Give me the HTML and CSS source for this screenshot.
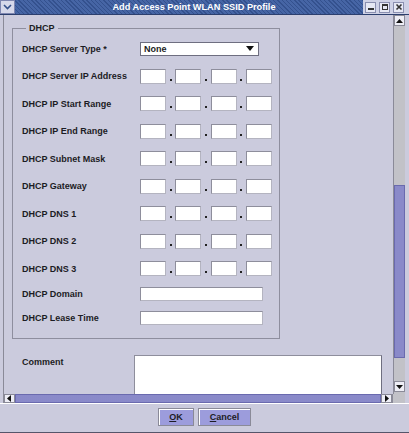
FILE: index.html
```html
<!DOCTYPE html>
<html>
  <head>
    <meta charset="utf-8">
    <link rel="stylesheet" href="styles.css">
  </head>
  <body>
    <div class="window">
      <div class="titlebar">
        <div class="menu-btn">
          <svg width="9" height="6" viewBox="0 0 9 6"><path d="M1 1 L4.5 4.5 L8 1" fill="none" stroke="#34508a" stroke-width="1.6"/></svg>
        </div>
        <div class="title">Add Access Point WLAN SSID Profile</div>
        <div class="controls">
          <span class="ctl"><svg width="8" height="8" viewBox="0 0 8 8"><rect x="1" y="5" width="6" height="2" fill="#333"/></svg></span>
          <span class="ctl"><svg width="8" height="8" viewBox="0 0 8 8"><rect x="1.5" y="1.5" width="5" height="5" fill="none" stroke="#333"/><rect x="1" y="1" width="6" height="2" fill="#333"/></svg></span>
          <span class="ctl"><svg width="8" height="8" viewBox="0 0 8 8"><path d="M1.5 1.5 L6.5 6.5 M6.5 1.5 L1.5 6.5" stroke="#333" stroke-width="1.6"/></svg></span>
        </div>
      </div>

      <div class="pane">
        <div class="pane-main">
          <div class="viewport">
            <fieldset class="group">
              <legend>DHCP</legend>
              <div class="row">
                <label>DHCP Server Type *</label>
                <div class="select">
                  <span>None</span>
                  <svg width="8" height="5" viewBox="0 0 8 5"><path d="M0 0 H8 L4 5 Z" fill="#111"/></svg>
                </div>
              </div>
              <div class="row">
                <label>DHCP Server IP Address</label>
                <div class="ip"><span class="box"></span><i></i><span class="box"></span><i></i><span class="box"></span><i></i><span class="box"></span></div>
              </div>
              <div class="row">
                <label>DHCP IP Start Range</label>
                <div class="ip"><span class="box"></span><i></i><span class="box"></span><i></i><span class="box"></span><i></i><span class="box"></span></div>
              </div>
              <div class="row">
                <label>DHCP IP End Range</label>
                <div class="ip"><span class="box"></span><i></i><span class="box"></span><i></i><span class="box"></span><i></i><span class="box"></span></div>
              </div>
              <div class="row">
                <label>DHCP Subnet Mask</label>
                <div class="ip"><span class="box"></span><i></i><span class="box"></span><i></i><span class="box"></span><i></i><span class="box"></span></div>
              </div>
              <div class="row">
                <label>DHCP Gateway</label>
                <div class="ip"><span class="box"></span><i></i><span class="box"></span><i></i><span class="box"></span><i></i><span class="box"></span></div>
              </div>
              <div class="row">
                <label>DHCP DNS 1</label>
                <div class="ip"><span class="box"></span><i></i><span class="box"></span><i></i><span class="box"></span><i></i><span class="box"></span></div>
              </div>
              <div class="row">
                <label>DHCP DNS 2</label>
                <div class="ip"><span class="box"></span><i></i><span class="box"></span><i></i><span class="box"></span><i></i><span class="box"></span></div>
              </div>
              <div class="row">
                <label>DHCP DNS 3</label>
                <div class="ip"><span class="box"></span><i></i><span class="box"></span><i></i><span class="box"></span><i></i><span class="box"></span></div>
              </div>
              <div class="row text-row">
                <label>DHCP Domain</label>
                <span class="field"></span>
              </div>
              <div class="row text-row">
                <label>DHCP Lease Time</label>
                <span class="field"></span>
              </div>
            </fieldset>

            <div class="comment-row">
              <label>Comment</label>
              <span class="textarea"></span>
            </div>
          </div>

          <div class="vscroll">
            <span class="arrow up"><svg width="7" height="4" viewBox="0 0 7 4"><path d="M0 4 H7 L3.5 0 Z" fill="#111"/></svg></span>
            <span class="track"></span>
            <span class="thumb"></span>
            <span class="track short"></span>
            <span class="arrow down"><svg width="7" height="4" viewBox="0 0 7 4"><path d="M0 0 H7 L3.5 4 Z" fill="#111"/></svg></span>
          </div>
        </div>

        <div class="hscroll-row">
          <span class="harrow"><svg width="4" height="7" viewBox="0 0 4 7"><path d="M4 0 V7 L0 3.5 Z" fill="#111"/></svg></span>
          <span class="hthumb"></span>
          <span class="harrow"><svg width="4" height="7" viewBox="0 0 4 7"><path d="M0 0 V7 L4 3.5 Z" fill="#111"/></svg></span>
          <span class="corner"></span>
        </div>
      </div>

      <div class="buttonbar">
        <button class="btn ok"><u>O</u>K</button>
        <button class="btn cancel"><u>C</u>ancel</button>
      </div>
    </div>
  </body>
</html>
```

FILE: styles.css
```css
body {
  margin: 0;
  font-family: "Liberation Sans", Arial, sans-serif;
  background-color: #cbcbdd;
}

.window {
  width: 409px;
  height: 433px;
  box-sizing: border-box;
  display: flex;
  flex-direction: column;
  background-color: #cbcbdd;
  border-bottom: 1px solid #55556a;
}

/* title bar */

.titlebar {
  height: 15px;
  display: flex;
  border-bottom: 1px solid #2c3f6e;
  box-sizing: border-box;
}

.menu-btn {
  width: 15px;
  box-sizing: border-box;
  background-color: #d6d8ea;
  border: 1px solid #7e86b0;
  display: flex;
  align-items: center;
  justify-content: center;
}

.title {
  flex-grow: 1;
  color: #fff;
  font-weight: bold;
  font-size: 9.2px;
  line-height: 14px;
  text-align: center;
  padding-left: 10px;
  background: repeating-linear-gradient(45deg, #34518e 0 1px, #4665a5 1px 3px);
}

.controls {
  width: 44px;
  display: flex;
  align-items: center;
  gap: 3px;
  padding-left: 2px;
  background-color: #cfd2e6;
}

.ctl {
  width: 11px;
  height: 11px;
  box-sizing: border-box;
  border: 1px solid #8a8fb0;
  background-color: #e6e8f4;
  display: flex;
  align-items: center;
  justify-content: center;
}

/* scroll pane */

.pane {
  height: 388px;
  margin-left: 3px;
  margin-right: 4px;
  border-left: 1px solid #8a8a98;
  display: flex;
  flex-direction: column;
}

.pane-main {
  flex-grow: 1;
  display: flex;
  min-height: 0;
}

.viewport {
  flex-grow: 1;
  overflow: hidden;
  padding: 8px 0 0 8px;
}

label {
  font-weight: bold;
  font-size: 9px;
  color: #1c1c24;
}

.group {
  width: 268px;
  box-sizing: border-box;
  margin: 0;
  padding: 7px 0 13px 9px;
  border: 1px solid #8e8e9e;
}

.group legend {
  font-weight: bold;
  font-size: 9px;
  line-height: 11px;
  color: #1c1c24;
  padding: 0 3px;
  margin-left: 4px;
}

.row {
  display: flex;
  align-items: center;
  height: 15px;
}

.row + .row {
  margin-top: 12.5px;
}

.row label {
  width: 118px;
}

.row.text-row {
  height: 14px;
  margin-top: 10.5px;
}

.select {
  width: 119px;
  height: 14px;
  box-sizing: border-box;
  border: 1px solid #6e6e80;
  background-color: #fff;
  display: flex;
  align-items: center;
  justify-content: space-between;
  padding: 0 4px 0 3px;
  font-weight: bold;
  font-size: 9px;
  color: #1c1c24;
}

.ip {
  display: flex;
  align-items: flex-end;
  height: 15px;
}

.box {
  width: 26px;
  height: 15px;
  box-sizing: border-box;
  background-color: #fff;
  border: 1px solid #b4b4c0;
  border-top-color: #8e8e9c;
  border-left-color: #8e8e9c;
}

.ip i {
  width: 2px;
  height: 2px;
  margin: 0 3.7px 3px 3.7px;
  background-color: #222;
}

.field {
  width: 123px;
  height: 14px;
  box-sizing: border-box;
  background-color: #fff;
  border: 1px solid #b4b4c0;
  border-top-color: #8e8e9c;
  border-left-color: #8e8e9c;
}

.comment-row {
  display: flex;
  margin: 16px 0 0 10px;
}

.comment-row label {
  width: 112px;
  line-height: 11px;
  padding-top: 2px;
}

.textarea {
  width: 248px;
  height: 60px;
  box-sizing: border-box;
  background-color: #fff;
  border: 1px solid #8e8e9c;
  border-right-color: #6e6e80;
}

/* scrollbars */

.vscroll {
  width: 11px;
  display: flex;
  flex-direction: column;
  background-color: #c2c2c8;
  border-left: 1px solid #8a8a98;
}

.arrow {
  height: 11px;
  flex-shrink: 0;
  box-sizing: border-box;
  background-color: #eeeef6;
  border: 1px solid #8a8a98;
  display: flex;
  align-items: center;
  justify-content: center;
}

.track {
  height: 159px;
}

.track.short {
  height: 23px;
}

.thumb,
.hthumb {
  box-sizing: border-box;
  border: 1px solid #6a6aae;
  background-color: #9c9cd8;
  background-image: radial-gradient(#7474b8 0.6px, transparent 0.8px);
  background-size: 2px 2px;
}

.thumb {
  height: 173px;
}

.hscroll-row {
  height: 10px;
  display: flex;
  background-color: #c2c2c8;
}

.harrow {
  width: 11px;
  box-sizing: border-box;
  background-color: #eeeef6;
  border: 1px solid #8a8a98;
  display: flex;
  align-items: center;
  justify-content: center;
}

.hthumb {
  width: 367px;
}

.corner {
  width: 12px;
  background-color: #c2c2c8;
  border-left: 1px solid #8a8a98;
}

/* buttons */

.buttonbar {
  flex-grow: 1;
  border-top: 1px solid #fff;
  display: flex;
  justify-content: center;
  align-items: flex-start;
  gap: 4px;
  padding-top: 4px;
}

.btn {
  height: 18px;
  box-sizing: border-box;
  border: 1px solid #8a8a98;
  box-shadow: inset 1px 1px 0 #fff;
  background-color: #9c9cdc;
  font-family: "Liberation Sans", Arial, sans-serif;
  font-weight: bold;
  font-size: 9px;
  color: #1c1c24;
  padding: 0;
}

.btn.ok {
  width: 36px;
}

.btn.cancel {
  width: 53px;
}
```
